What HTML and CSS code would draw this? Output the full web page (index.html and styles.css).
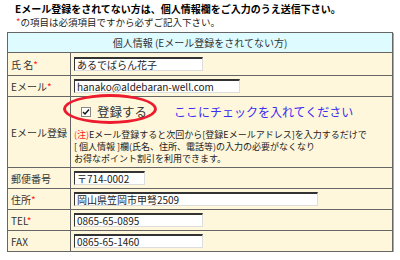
FILE: index.html
```html
<!DOCTYPE html>
<html lang="ja">
<head>
  <meta charset="UTF-8">
  <title>個人情報入力</title>
  <link rel="stylesheet" href="styles.css">
</head>
<body>

<p class="lead">Eメール登録をされてない方は、個人情報欄をご入力のうえ送信下さい。</p>
<p class="sub"><span class="req">*</span>の項目は必須項目ですから必ずご記入下さい。</p>

<table class="form">
  <tr>
    <th colspan="2" class="head">個人情報 (Eメール登録をされてない方)</th>
  </tr>
  <tr class="r-name">
    <td class="label">氏 名<span class="req">*</span></td>
    <td><input class="w-name" type="text" value="あるでばらん花子"></td>
  </tr>
  <tr>
    <td class="label">Eメール<span class="req">*</span></td>
    <td><input class="w-mail" type="text" value="hanako@aldebaran-well.com"></td>
  </tr>
  <tr class="r-reg">
    <td class="label">Eメール登録</td>
    <td>
      <div class="opt">
        <label class="check">
          <span class="box">
            <svg width="8" height="8" viewBox="0 0 8 8"><path d="M1 4 L3 6 L7 1.5" fill="none" stroke="#111" stroke-width="1.4"/></svg>
          </span>
          <span>登録する</span>
          <span class="ring"></span>
        </label>
        <span class="hint">ここにチェックを入れてください</span>
      </div>
      <p class="memo">
        <span class="red">(注)</span>Eメール登録すると次回から[登録Eメールアドレス]を入力するだけで<br>
        [ 個人情報 ]欄(氏名、住所、電話等)の入力の必要がなくなり<br>
        お得なポイント割引を利用できます。
      </p>
    </td>
  </tr>
  <tr>
    <td class="label">郵便番号</td>
    <td><input class="w-zip" type="text" value="〒714-0002"></td>
  </tr>
  <tr>
    <td class="label">住所<span class="req">*</span></td>
    <td><input class="w-addr" type="text" value="岡山県笠岡市甲弩2509"></td>
  </tr>
  <tr>
    <td class="label">TEL<span class="req">*</span></td>
    <td><input class="w-tel" type="text" value="0865-65-0895"></td>
  </tr>
  <tr>
    <td class="label">FAX</td>
    <td><input class="w-tel" type="text" value="0865-65-1460"></td>
  </tr>
</table>

</body>
</html>
```

FILE: styles.css
```css
body {
  margin: 0;
  padding: 3px 7px 0;
  background: #fff;
  font-family: "Noto Sans CJK JP", "DejaVu Sans", sans-serif;
  color: #333;
  font-size: 10px;
}

.lead {
  margin: 0 0 0 8px;
  font-weight: bold;
  color: #000;
  font-size: 10px;
  line-height: 12px;
}

.sub {
  margin: 1px 0 0 9px;
  font-size: 9.5px;
  line-height: 12px;
  color: #222;
}

.req,
.red {
  color: #ff1a1a;
}

.form {
  margin-top: 4px;
  width: 386px;
  border-collapse: collapse;
  border: 1px solid #555;
  box-shadow: 1px 1px 0 #aaa;
}

.form th,
.form td {
  border: 1px solid #666;
  padding: 0 3px;
  background: #fff7dc;
  height: 20px;
  text-align: left;
  font-weight: normal;
}

.form .head {
  background: #defbff;
  text-align: center;
  height: 19px;
  color: #333;
}

.form .label {
  width: 55px;
  white-space: nowrap;
}

.r-name td {
  height: 22px;
}

.form input[type="text"] {
  display: block;
  height: 14px;
  box-sizing: border-box;
  margin: 0;
  padding: 0 2px;
  font: 10px "Noto Sans CJK JP", "DejaVu Sans", sans-serif;
  color: #222;
  background: #fff;
  border: 1px solid;
  border-color: #333 #ddd #ddd #333;
  border-top-width: 2px;
}

.w-name { width: 129px; }
.w-mail { width: 166px; }
.w-zip  { width: 71px; }
.w-addr { width: 244px; }
.w-tel  { width: 129px; }

.r-reg td {
  height: 70px;
}

.opt {
  display: flex;
  align-items: center;
}

.check {
  position: relative;
  display: flex;
  align-items: center;
  gap: 6px;
  margin-left: 7px;
  padding: 4px 0;
  font-size: 12.5px;
  color: #333;
}

.box {
  display: flex;
  align-items: center;
  justify-content: center;
  width: 8px;
  height: 8px;
  margin-top: 2px;
  background: #fff;
  border: 1px solid #888;
}

.ring {
  position: absolute;
  left: -18px;
  top: -4px;
  width: 88px;
  height: 24px;
  border: 3px solid #ec1b2e;
  border-radius: 50%;
}

.hint {
  margin-left: 27px;
  font-size: 12px;
  color: #3b2cf5;
}

.memo {
  margin: 4px 0 2px;
  font-size: 9px;
  line-height: 12px;
  color: #222;
}
```
